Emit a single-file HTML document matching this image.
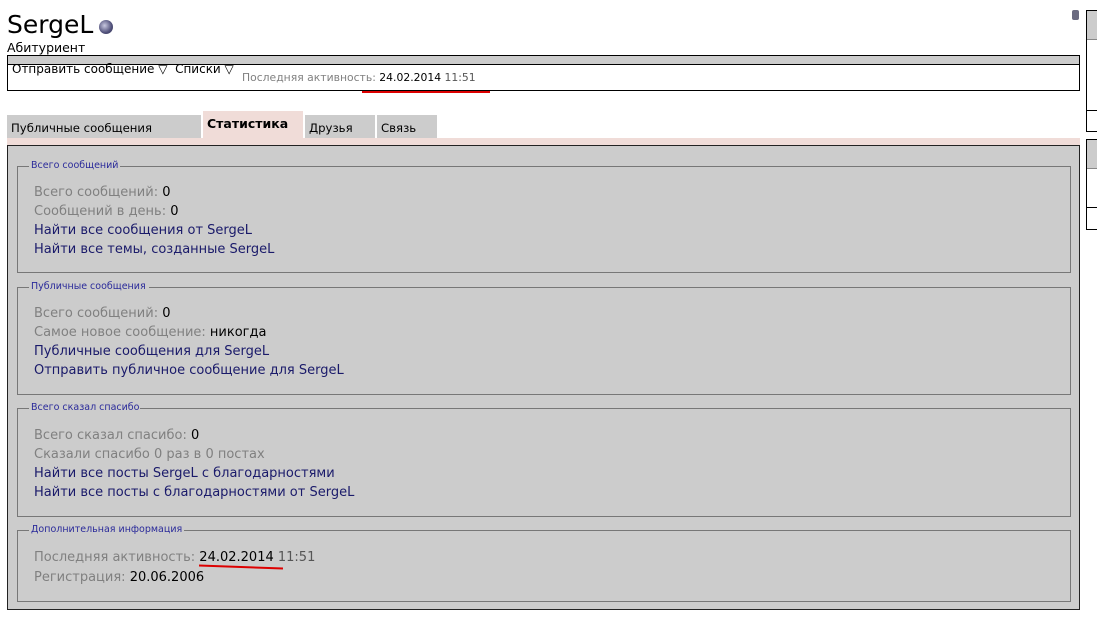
<!DOCTYPE html>
<html><head><meta charset="utf-8"><style>
body{margin:0;width:1097px;height:618px;background:#fff;font-family:"DejaVu Sans","Liberation Sans",sans-serif;position:relative;overflow:hidden}
.a{position:absolute;white-space:nowrap}
.fs{position:absolute;left:17px;width:1052px;border:1px solid #777;border-top:none}
.fs .line{position:absolute;top:0;height:1px;background:#777}
.lg{position:absolute;top:-6px;left:13px;font-size:9.5px;color:#2a2a9a}
.r{position:absolute;left:16px;font-size:13px;letter-spacing:0;color:#000;white-space:nowrap}
.g{color:#808080}
.l{color:#1a1a6a}
</style></head><body>
<div class="a" style="left:7px;top:10px;font-size:25px;color:#000">SergeL</div>
<div class="a" style="left:99px;top:20px;width:14px;height:14px;border-radius:50%;background:radial-gradient(circle at 40% 40%,#c8c8e0,#50507a 60%,#303050)"></div>
<div class="a" style="left:7px;top:40px;font-size:12.5px">Абитуриент</div>
<div class="a" style="left:7px;top:55px;width:1071px;height:34px;border:1px solid #000"></div>
<div class="a" style="left:8px;top:56px;width:1071px;height:8px;background:#ccc;border-bottom:1px solid #000"></div>
<div class="a" style="left:12px;top:62px;font-size:12px">Отправить сообщение ▽ &nbsp;Списки ▽</div>
<div class="a" style="left:242px;top:71px;font-size:10.8px;color:#808080">Последняя активность: <span style="color:#000">24.02.2014</span> <span style="color:#555">11:51</span></div>
<div class="a" style="left:362px;top:91px;width:128px;height:2px;background:#d00"></div>
<div class="a" style="left:1072px;top:10px;width:7px;height:10px;background:#6a6a80;border-radius:2px"></div>
<div class="a" style="left:1086px;top:10px;width:20px;height:120px;border:1px solid #000;background:#fff"></div>
<div class="a" style="left:1087px;top:11px;width:20px;height:28px;background:#ccc;border-bottom:1px solid #888"></div>
<div class="a" style="left:1087px;top:110px;width:20px;height:1px;background:#000"></div>
<div class="a" style="left:1086px;top:139px;width:20px;height:89px;border:1px solid #000;background:#fff"></div>
<div class="a" style="left:1087px;top:140px;width:20px;height:28px;background:#ccc;border-bottom:1px solid #888"></div>
<div class="a" style="left:1087px;top:207px;width:20px;height:1px;background:#000"></div>
<div class="a" style="left:7px;top:115px;width:194px;height:23px;background:#ccc"></div>
<div class="a" style="left:11px;top:121px;font-size:11.7px">Публичные сообщения</div>
<div class="a" style="left:203px;top:111px;width:100px;height:30px;background:#f0dcd8"></div>
<div class="a" style="left:207px;top:116px;font-size:12.5px;font-weight:bold">Статистика</div>
<div class="a" style="left:305px;top:115px;width:70px;height:23px;background:#ccc"></div>
<div class="a" style="left:309px;top:121px;font-size:11.7px">Друзья</div>
<div class="a" style="left:377px;top:115px;width:60px;height:23px;background:#ccc"></div>
<div class="a" style="left:381px;top:121px;font-size:11.7px">Связь</div>
<div class="a" style="left:7px;top:138px;width:1073px;height:7px;background:#f0dcd8"></div>
<div class="a" style="left:7px;top:145px;width:1071px;height:463px;background:#ccc;border:1px solid #222"></div>

<div class="fs" style="top:166px;height:106px"><div class="line" style="left:-1px;width:12px"></div><div class="line" style="left:102px;right:-1px"></div><div class="lg">Всего сообщений</div>
<div class="r" style="top:19px"><span class="g">Всего сообщений:</span> 0</div>
<div class="r" style="top:38px"><span class="g">Сообщений в день:</span> 0</div>
<div class="r l" style="top:57px">Найти все сообщения от SergeL</div>
<div class="r l" style="top:76px">Найти все темы, созданные SergeL</div></div>

<div class="fs" style="top:287px;height:107px"><div class="line" style="left:-1px;width:12px"></div><div class="line" style="left:131px;right:-1px"></div><div class="lg">Публичные сообщения</div>
<div class="r" style="top:19px"><span class="g">Всего сообщений:</span> 0</div>
<div class="r" style="top:38px"><span class="g">Самое новое сообщение:</span> никогда</div>
<div class="r l" style="top:57px">Публичные сообщения для SergeL</div>
<div class="r l" style="top:76px">Отправить публичное сообщение для SergeL</div></div>

<div class="fs" style="top:408px;height:108px"><div class="line" style="left:-1px;width:12px"></div><div class="line" style="left:122px;right:-1px"></div><div class="lg">Всего сказал спасибо</div>
<div class="r" style="top:20px"><span class="g">Всего сказал спасибо:</span> 0</div>
<div class="r g" style="top:39px">Сказали спасибо 0 раз в 0 постах</div>
<div class="r l" style="top:58px">Найти все посты SergeL с благодарностями</div>
<div class="r l" style="top:77px">Найти все посты с благодарностями от SergeL</div></div>

<div class="fs" style="top:530px;height:71px"><div class="line" style="left:-1px;width:12px"></div><div class="line" style="left:166px;right:-1px"></div><div class="lg">Дополнительная информация</div>
<div class="r" style="top:20px"><span class="g">Последняя активность:</span> 24.02.2014 <span style="color:#555">11:51</span></div>
<div class="r" style="top:40px"><span class="g">Регистрация:</span> 20.06.2006</div></div>
<div class="a" style="left:199px;top:566px;width:84px;height:2px;background:#d00;transform:rotate(2deg)"></div>
</body></html>
